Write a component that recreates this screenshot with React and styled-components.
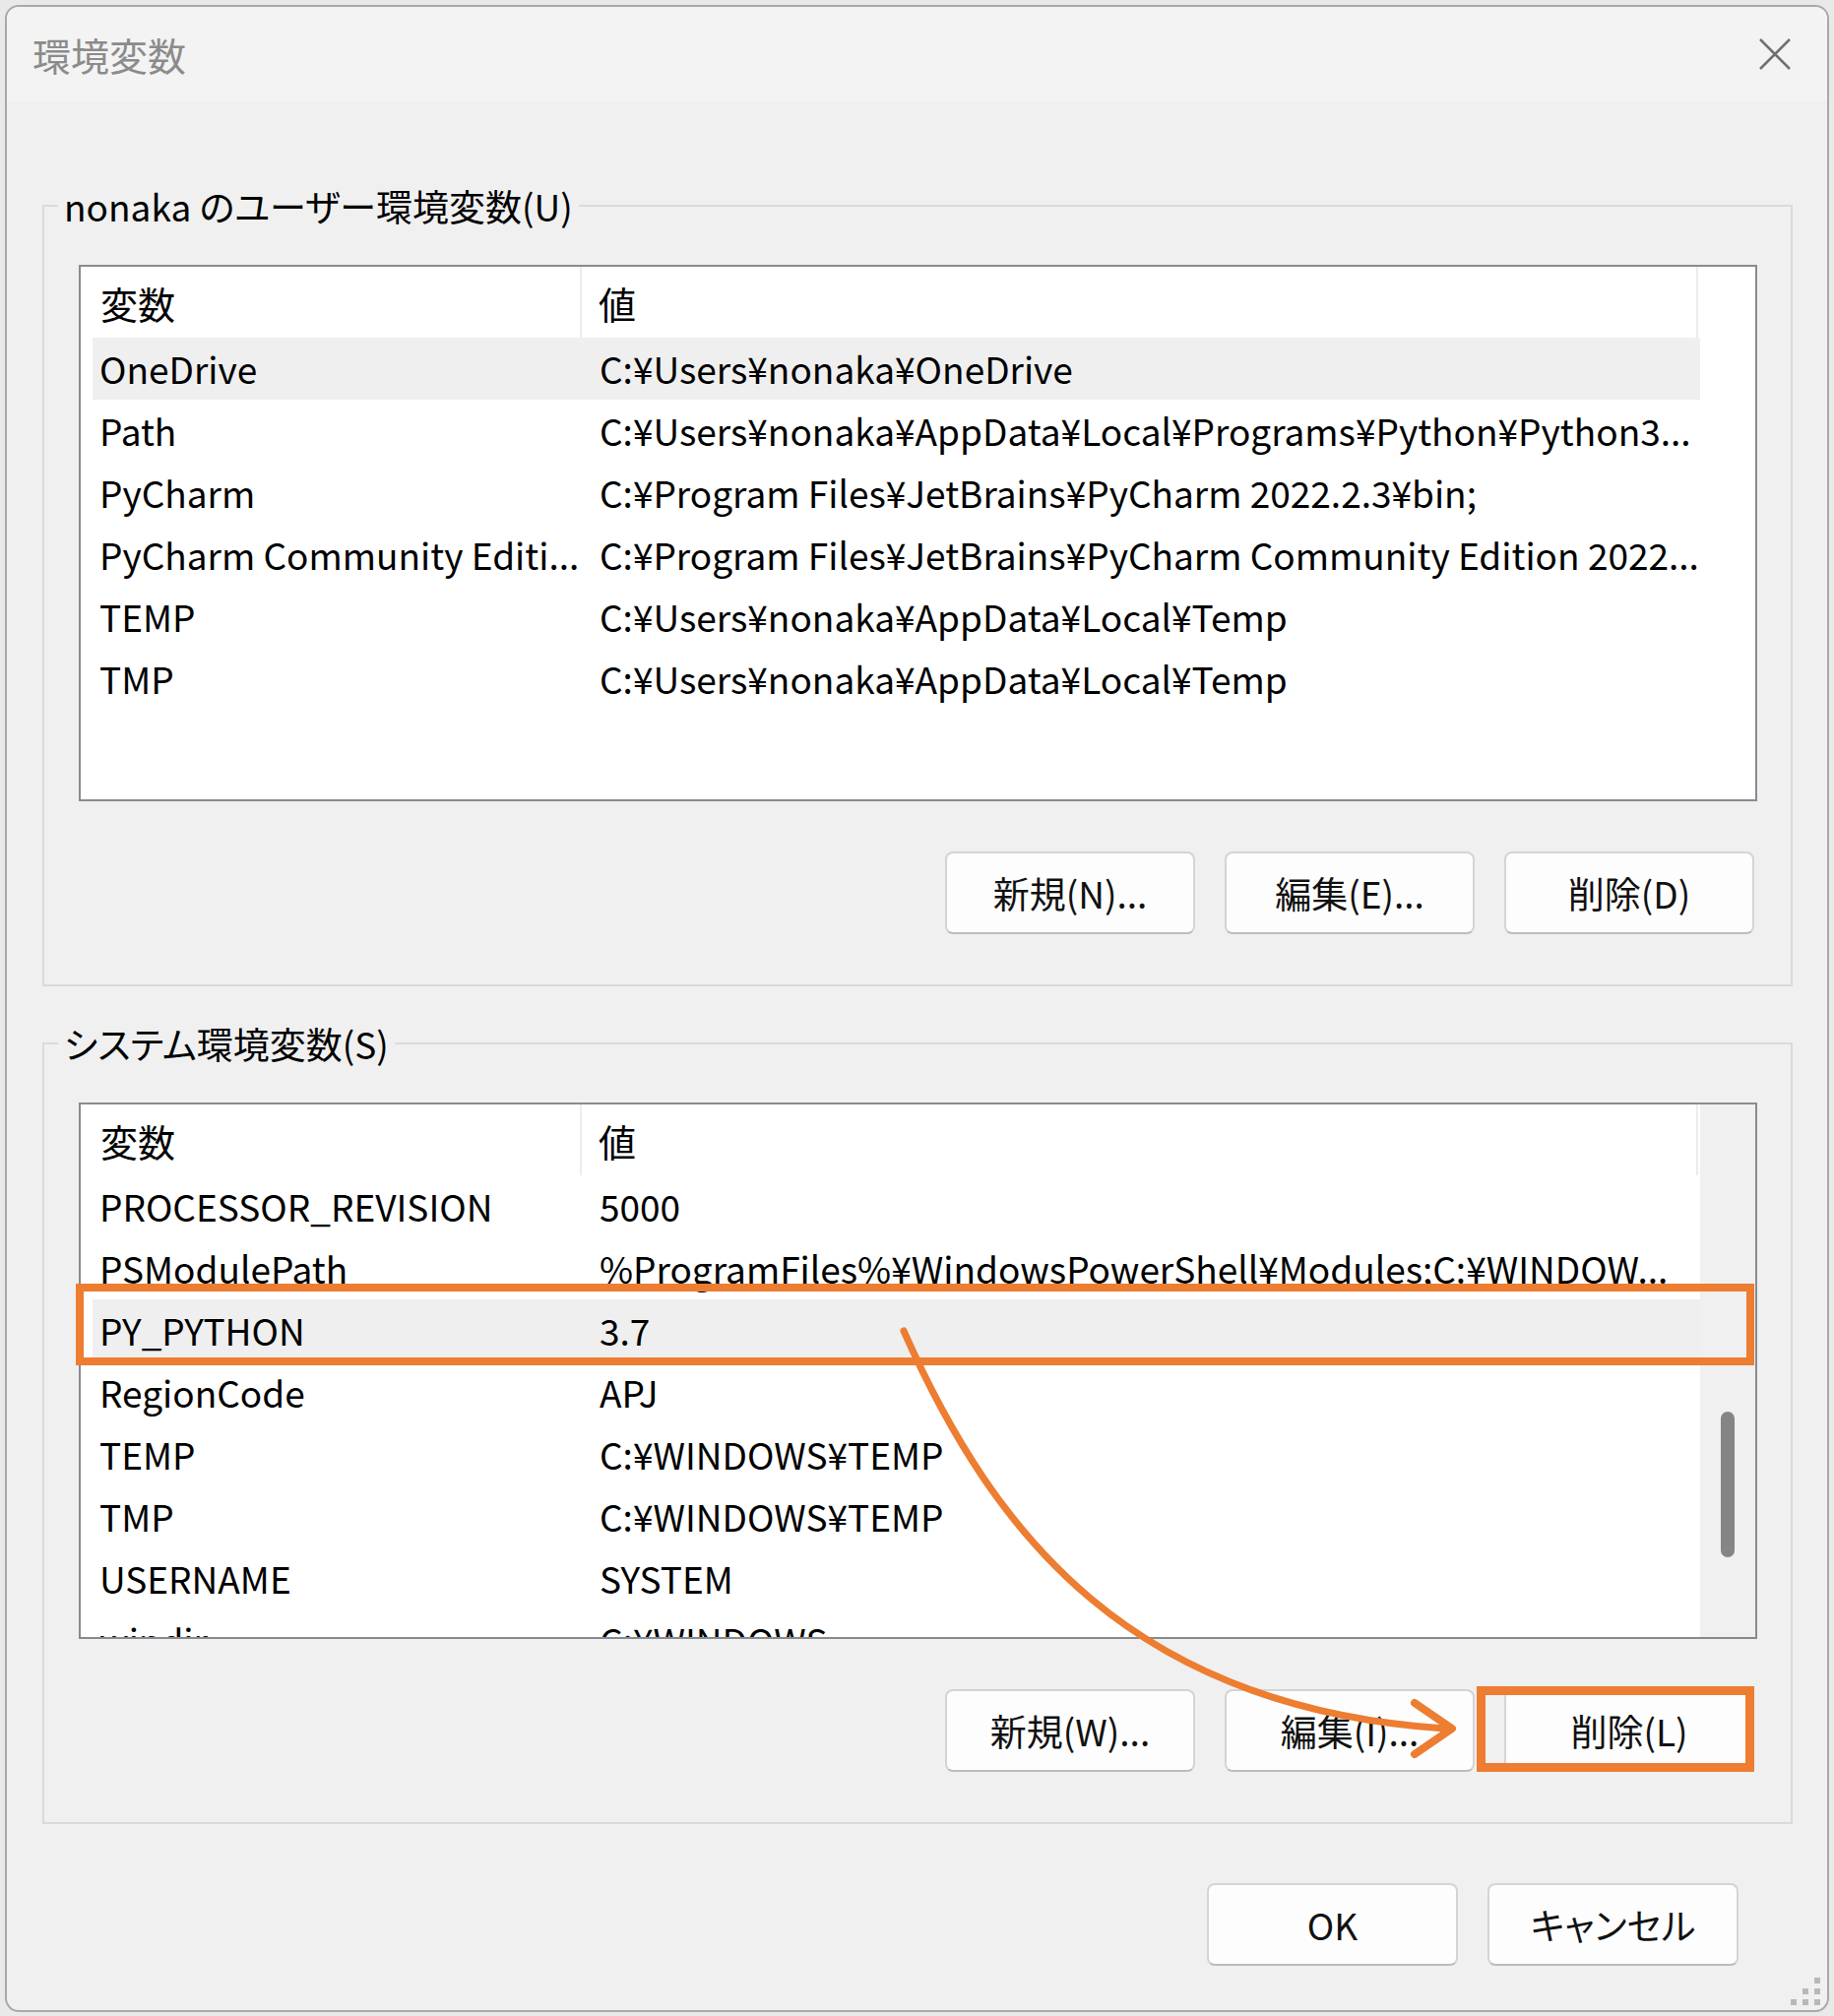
import styled, { createGlobalStyle } from "styled-components";

const ORANGE = "#ED7D31";

const GlobalStyle = createGlobalStyle`
  html, body {
    margin: 0;
    padding: 0;
    background: #e9e9e9;
  }
  body {
    font-family: "Noto Sans CJK JP", "Noto Sans", sans-serif;
    font-feature-settings: "palt";
    color: #000;
  }
`;

const Page = styled.div`
  position: relative;
  width: 1863px;
  height: 2048px;
  padding: 5px 0 0 5px;
  box-sizing: border-box;
  overflow: hidden;
`;

const Window = styled.div`
  position: relative;
  width: 1853px;
  height: 2039px;
  box-sizing: border-box;
  border: 2px solid #a9a9a9;
  border-radius: 14px;
  background: #f0f0f0;
  overflow: hidden;
  display: flex;
  flex-direction: column;
`;

const TitleBar = styled.div`
  height: 96px;
  flex: none;
  background: #f3f3f3;
  display: flex;
  align-items: center;
  justify-content: space-between;
  padding: 0 36px 0 26px;
`;

const Title = styled.div`
  font-size: 39px;
  color: #8b8b8b;
`;

const Content = styled.div`
  padding: 79px 35px 0 36px;
  display: flex;
  flex-direction: column;
`;

const Group = styled.fieldset`
  margin: ${(p) => (p.$second ? "31px" : "0")} 0 0 0;
  padding: 33px 34px 51px 35px;
  border: 2px solid #dadada;
  min-width: 0;
`;

const Legend = styled.legend`
  margin-left: -21px;
  padding: 0 6px;
  font-size: 37px;
  line-height: 54px;
`;

const ListBox = styled.div`
  height: 545px;
  box-sizing: border-box;
  border: 2px solid #878b91;
  background: #fff;
  display: flex;
  overflow: hidden;
`;

const Table = styled.div`
  width: 1645px;
  flex: none;
  display: flex;
  flex-direction: column;
`;

const Header = styled.div`
  display: grid;
  grid-template-columns: 509px 1134px;
  height: 72px;
  flex: none;
`;

const HeaderCell = styled.div`
  display: flex;
  align-items: center;
  padding-left: ${(p) => (p.$first ? "20px" : "17px")};
  border-right: 2px solid #ececec;
  font-size: 38px;
`;

const Row = styled.div`
  display: grid;
  grid-template-columns: 497px 1134px;
  height: 63px;
  flex: none;
  margin-left: 12px;
  background: ${(p) => (p.$selected ? "#efefef" : "transparent")};
`;

const Cell = styled.div`
  font-size: 37px;
  line-height: 63px;
  white-space: nowrap;
  overflow: hidden;
  padding: ${(p) => (p.$value ? "0 6px 0 18px" : "0 2px 0 7px")};
`;

const Track = styled.div`
  flex: 1;
  display: flex;
  justify-content: center;
  background: ${(p) => (p.$shown ? "#f0f0f0" : "#fff")};
`;

const Thumb = styled.div`
  margin-top: 312px;
  width: 14px;
  height: 148px;
  border-radius: 7px;
  background: #858585;
`;

const ButtonRow = styled.div`
  display: flex;
  justify-content: flex-end;
  gap: 30px;
  margin-top: ${(p) => p.$top || "51px"};
  padding-right: ${(p) => p.$right || "3px"};
`;

const Button = styled.button`
  width: ${(p) => p.$width || "254px"};
  height: 84px;
  box-sizing: border-box;
  border: 2px solid #d4d4d4;
  border-bottom-color: #bcbcbc;
  border-radius: 8px;
  background: #fdfdfd;
  font-family: inherit;
  font-feature-settings: "palt";
  font-size: 37px;
  color: #111;
  padding: 0;
`;

const Grip = styled.svg`
  position: absolute;
  right: 4px;
  bottom: 3px;
`;

const Overlay = styled.svg`
  position: absolute;
  left: 0;
  top: 0;
  pointer-events: none;
`;

const userVars = [
  ["OneDrive", "C:¥Users¥nonaka¥OneDrive"],
  ["Path", "C:¥Users¥nonaka¥AppData¥Local¥Programs¥Python¥Python3..."],
  ["PyCharm", "C:¥Program Files¥JetBrains¥PyCharm 2022.2.3¥bin;"],
  ["PyCharm Community Editi...", "C:¥Program Files¥JetBrains¥PyCharm Community Edition 2022..."],
  ["TEMP", "C:¥Users¥nonaka¥AppData¥Local¥Temp"],
  ["TMP", "C:¥Users¥nonaka¥AppData¥Local¥Temp"],
];

const systemVars = [
  ["PROCESSOR_REVISION", "5000"],
  ["PSModulePath", "%ProgramFiles%¥WindowsPowerShell¥Modules;C:¥WINDOW..."],
  ["PY_PYTHON", "3.7"],
  ["RegionCode", "APJ"],
  ["TEMP", "C:¥WINDOWS¥TEMP"],
  ["TMP", "C:¥WINDOWS¥TEMP"],
  ["USERNAME", "SYSTEM"],
  ["windir", "C:¥WINDOWS"],
];

const VarList = ({ rows, selected, scroll }) => (
  <ListBox>
    <Table>
      <Header>
        <HeaderCell $first>変数</HeaderCell>
        <HeaderCell>値</HeaderCell>
      </Header>
      {rows.map(([name, value], i) => (
        <Row key={name + i} $selected={i === selected}>
          <Cell>{name}</Cell>
          <Cell $value>{value}</Cell>
        </Row>
      ))}
    </Table>
    <Track $shown={scroll}>{scroll && <Thumb />}</Track>
  </ListBox>
);

const App = () => {
  return (
    <Page>
      <GlobalStyle />
      <Window>
        <TitleBar>
          <Title>環境変数</Title>
          <svg width="34" height="34" viewBox="0 0 34 34">
            <path d="M2 2 L32 32 M32 2 L2 32" stroke="#707070" strokeWidth="2.5" fill="none" />
          </svg>
        </TitleBar>
        <Content>
          <Group>
            <Legend>nonaka のユーザー環境変数(U)</Legend>
            <VarList rows={userVars} selected={0} />
            <ButtonRow>
              <Button>新規(N)...</Button>
              <Button>編集(E)...</Button>
              <Button>削除(D)</Button>
            </ButtonRow>
          </Group>
          <Group $second>
            <Legend>システム環境変数(S)</Legend>
            <VarList rows={systemVars} selected={2} scroll />
            <ButtonRow>
              <Button>新規(W)...</Button>
              <Button>編集(I)...</Button>
              <Button>削除(L)</Button>
            </ButtonRow>
          </Group>
          <ButtonRow $top="60px" $right="55px">
            <Button $width="255px">OK</Button>
            <Button $width="255px">キャンセル</Button>
          </ButtonRow>
        </Content>
        <Grip width="34" height="32" viewBox="0 0 34 32">
          <g fill="#b8b8b8">
            <rect x="25" y="2" width="6" height="6" />
            <rect x="13" y="13" width="6" height="6" />
            <rect x="25" y="13" width="6" height="6" />
            <rect x="1" y="24" width="6" height="6" />
            <rect x="13" y="24" width="6" height="6" />
            <rect x="25" y="24" width="6" height="6" />
          </g>
        </Grip>
      </Window>
      <Overlay width="1863" height="2048" viewBox="0 0 1863 2048">
        <g fill="none" stroke={ORANGE}>
          <rect x="81" y="1308" width="1697" height="75" strokeWidth="8" />
          <rect x="1504.5" y="1717.5" width="273" height="78" strokeWidth="9" />
          <path
            d="M918 1352 C1010 1560 1150 1735 1468 1756"
            strokeWidth="7"
            strokeLinecap="round"
          />
          <path
            d="M1437 1730 L1475 1756 L1437 1782"
            strokeWidth="8"
            strokeLinecap="round"
            strokeLinejoin="round"
          />
        </g>
      </Overlay>
    </Page>
  );
};

export default App;
